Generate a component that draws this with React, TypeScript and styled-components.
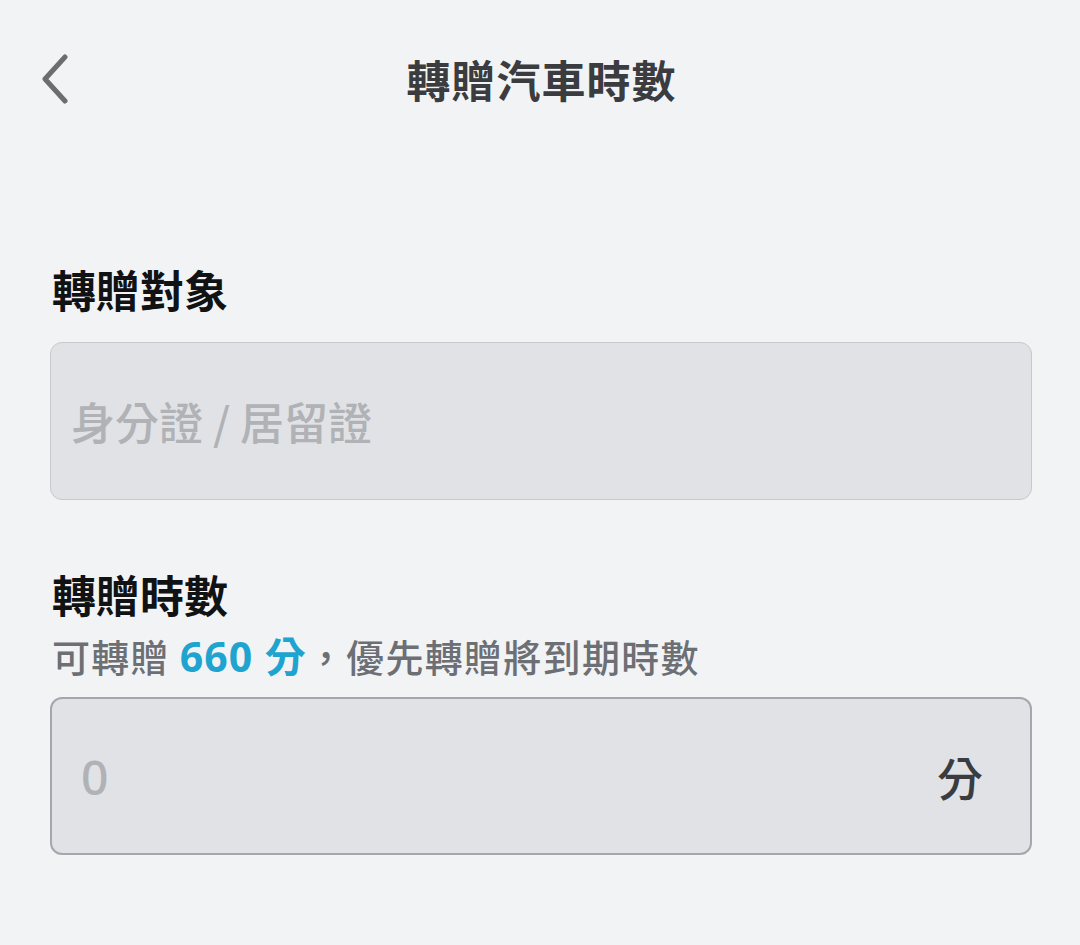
import React from "react";
import styled, { createGlobalStyle } from "styled-components";

const GlobalStyle = createGlobalStyle`
  html, body {
    margin: 0;
    padding: 0;
    background: #f2f3f5;
  }
  body {
    font-family: "Noto Sans CJK TC", "Noto Sans", sans-serif;
  }
  * { box-sizing: border-box; }
`;

const Page = styled.div`
  min-height: 945px;
  background: #f2f3f5;
  display: flex;
  flex-direction: column;
`;

const Header = styled.header`
  display: grid;
  grid-template-columns: 1fr auto 1fr;
  align-items: center;
  padding: 46px 0 0 0;
  height: 112px;
`;

const BackButton = styled.button`
  justify-self: start;
  margin-left: 36px;
  width: 40px;
  height: 56px;
  padding: 0;
  border: none;
  background: none;
  display: flex;
  align-items: center;
  justify-content: center;
  cursor: pointer;
`;

const Title = styled.h1`
  margin: 0 0 0 3px;
  font-size: 44px;
  line-height: 66px;
  font-weight: 700;
  letter-spacing: 1px;
  color: #3b3c3f;
`;

const Content = styled.main`
  display: flex;
  flex-direction: column;
  padding: 0 48px 0 50px;
`;

const Section = styled.section<{ $top: number }>`
  display: flex;
  flex-direction: column;
  margin-top: ${(p) => p.$top}px;
`;

const Label = styled.h2`
  margin: 0 0 0 2px;
  font-size: 44px;
  line-height: 66px;
  font-weight: 700;
  color: #111214;
`;

const Hint = styled.p`
  margin: 0 0 12px 2px;
  font-size: 38px;
  line-height: 57px;
  font-weight: 500;
  color: #6c6f74;
  letter-spacing: 1.3px;
`;

const Accent = styled.span`
  color: #1ea4cf;
  font-weight: 700;
  font-size: 41px;
  letter-spacing: 1px;
  font-family: "Noto Sans", "Noto Sans CJK TC", sans-serif;
`;

const Field = styled.div<{ $strong?: boolean; $padLeft: number }>`
  display: flex;
  align-items: center;
  height: 158px;
  margin-top: ${(p) => (p.$strong ? 0 : 20)}px;
  padding: 0 47px 0 ${(p) => p.$padLeft}px;
  background: #e0e2e6;
  border: ${(p) => (p.$strong ? "2px solid #a4a7ac" : "1px solid #c6c9cd")};
  border-radius: 12px;
`;

const Input = styled.input<{ $latin?: boolean }>`
  flex: 1;
  min-width: 0;
  border: none;
  outline: none;
  background: transparent;
  padding: 0;
  font-family: ${(p) =>
    p.$latin
      ? `"Noto Sans", "Noto Sans CJK TC", sans-serif`
      : `"Noto Sans CJK TC", "Noto Sans", sans-serif`};
  font-size: ${(p) => (p.$latin ? 48 : 44)}px;
  font-weight: 500;
  color: #333;
  &::placeholder {
    color: #b0b2b6;
  }
`;

const Unit = styled.span`
  font-size: 46px;
  font-weight: 500;
  color: #3b3c3f;
`;

export default function App() {
  return (
    <>
      <GlobalStyle />
      <Page>
        <Header>
          <BackButton aria-label="返回">
            <svg width="32" height="50" viewBox="0 0 32 50" fill="none">
              <path
                d="M25 3 L5 25 L25 47"
                stroke="#6b6d71"
                strokeWidth="5"
                strokeLinecap="round"
                strokeLinejoin="round"
              />
            </svg>
          </BackButton>
          <Title>轉贈汽車時數</Title>
          <span />
        </Header>
        <Content>
          <Section $top={144}>
            <Label>轉贈對象</Label>
            <Field $padLeft={20}>
              <Input placeholder="身分證 / 居留證" />
            </Field>
          </Section>
          <Section $top={61}>
            <Label>轉贈時數</Label>
            <Hint>
              可轉贈 <Accent>660 分</Accent>，優先轉贈將到期時數
            </Hint>
            <Field $strong $padLeft={29}>
              <Input $latin placeholder="0" inputMode="numeric" />
              <Unit>分</Unit>
            </Field>
          </Section>
        </Content>
      </Page>
    </>
  );
}
